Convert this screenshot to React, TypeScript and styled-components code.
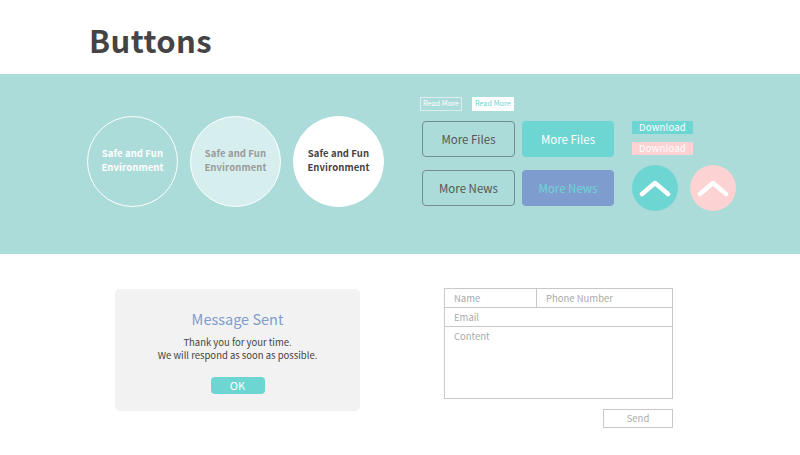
import React from "react";
import styled, { createGlobalStyle } from "styled-components";

const Global = createGlobalStyle`
  html, body { margin: 0; padding: 0; background: #ffffff; }
  body { font-family: "Noto Sans CJK TC", "Noto Sans", sans-serif; }
  * { box-sizing: border-box; }
`;

const TEAL = "#6dd6d3";
const PINK = "#fcd2d3";
const BLUE = "#7f9ccf";

const Page = styled.div`
  width: 800px;
  height: 455px;
  display: flex;
  flex-direction: column;
`;

const Header = styled.header`
  height: 74px;
  padding: 24px 0 0 89px;
  display: flex;
  align-items: flex-start;
`;

const Title = styled.h1`
  margin: 0;
  font-size: 31px;
  font-weight: 700;
  color: #444444;
  line-height: 1;
  letter-spacing: 0.4px;
`;

const Band = styled.section`
  height: 180px;
  background: #acdcd9;
  display: flex;
  align-items: flex-start;
  padding: 22px 0 0 87px;
`;

const CircleGroup = styled.div`
  display: flex;
  gap: 12px;
  margin-top: 20px;
`;

const Circle = styled.div<{ $variant: "outline" | "soft" | "solid" }>`
  width: 91px;
  height: 91px;
  border-radius: 50%;
  border: 1.5px solid #ffffff;
  display: flex;
  align-items: center;
  justify-content: center;
  text-align: center;
  padding-bottom: 3px;
  font-size: 9.5px;
  font-weight: 700;
  line-height: 14px;
  letter-spacing: 0.1px;
  background: ${(p) =>
    p.$variant === "outline" ? "transparent" : p.$variant === "soft" ? "#d6eeed" : "#ffffff"};
  color: ${(p) =>
    p.$variant === "outline" ? "#ffffff" : p.$variant === "soft" ? "#9a9a9a" : "#444444"};
`;

const ButtonGroup = styled.div`
  display: flex;
  flex-direction: column;
  margin-left: 36px;
`;

const SmallRow = styled.div`
  display: flex;
  gap: 10px;
  align-items: center;
  height: 15px;
`;

const Tiny = styled.div<{ $filled?: boolean }>`
  height: 14px;
  padding: 0 2px;
  display: flex;
  align-items: center;
  font-size: 7.3px;
  line-height: 1;
  border: 1px solid ${(p) => (p.$filled ? "#ffffff" : "#dcefee")};
  background: ${(p) => (p.$filled ? "#ffffff" : "transparent")};
  color: ${(p) => (p.$filled ? TEAL : "#ffffff")};
`;

const Grid = styled.div`
  margin-top: 10px;
  margin-left: 2px;
  display: grid;
  grid-template-columns: 93px 92px;
  column-gap: 7px;
  row-gap: 13px;
`;

const Btn = styled.div<{ $kind: "outline" | "teal" | "blue" }>`
  height: 36px;
  border-radius: 4px;
  display: flex;
  align-items: center;
  justify-content: center;
  font-size: 11.5px;
  border: 1px solid ${(p) => (p.$kind === "outline" ? "#6f8e8c" : "transparent")};
  background: ${(p) => (p.$kind === "teal" ? TEAL : p.$kind === "blue" ? BLUE : "transparent")};
  color: ${(p) => (p.$kind === "teal" ? "#ffffff" : p.$kind === "blue" ? TEAL : "#555555")};
`;

const RightGroup = styled.div`
  display: flex;
  flex-direction: column;
  margin-left: 18px;
  margin-top: 25px;
`;

const Download = styled.div<{ $pink?: boolean }>`
  width: 61px;
  height: 13px;
  border-radius: 1px;
  background: ${(p) => (p.$pink ? PINK : TEAL)};
  color: #ffffff;
  font-size: 9.5px;
  line-height: 13px;
  letter-spacing: 0.2px;
  text-align: center;
  & + & { margin-top: 8px; }
`;

const UpRow = styled.div`
  display: flex;
  gap: 12px;
  margin-top: 10px;
`;

const UpCircle = styled.div<{ $pink?: boolean }>`
  width: 46px;
  height: 46px;
  border-radius: 50%;
  background: ${(p) => (p.$pink ? PINK : TEAL)};
  display: flex;
  align-items: center;
  justify-content: center;
`;

const Lower = styled.section`
  display: flex;
  align-items: flex-start;
  padding: 34px 0 0 115px;
`;

const Card = styled.div`
  width: 245px;
  height: 122px;
  margin-top: 1px;
  background: #f2f2f2;
  border-radius: 5px;
  display: flex;
  flex-direction: column;
  align-items: center;
  padding-top: 20px;
`;

const CardTitle = styled.div`
  font-size: 14.5px;
  color: ${BLUE};
  line-height: 20px;
`;

const CardText = styled.div`
  margin-top: 7px;
  font-size: 9.5px;
  line-height: 12.5px;
  color: #444444;
  text-align: center;
`;

const Ok = styled.div`
  margin-top: 16px;
  width: 54px;
  height: 17px;
  border-radius: 4px;
  background: ${TEAL};
  color: #ffffff;
  font-size: 11px;
  line-height: 17px;
  text-align: center;
`;

const FormWrap = styled.div`
  margin-left: 84px;
  display: flex;
  flex-direction: column;
  align-items: flex-end;
`;

const Form = styled.div`
  width: 229px;
  border: 1px solid #c8c8c8;
  display: grid;
  grid-template-columns: 92px 1fr;
  grid-template-rows: 19px 19px 71px;
`;

const Field = styled.div<{ $span?: boolean; $right?: boolean; $last?: boolean }>`
  grid-column: ${(p) => (p.$span ? "1 / 3" : "auto")};
  border-right: ${(p) => (p.$right ? "1px solid #c8c8c8" : "none")};
  border-bottom: ${(p) => (p.$last ? "none" : "1px solid #c8c8c8")};
  padding: 3px 9px 0;
  font-size: 9.5px;
  line-height: 13px;
  color: #aaaaaa;
`;

const Send = styled.div`
  margin-top: 10px;
  width: 70px;
  height: 19px;
  border: 1px solid #c8c8c8;
  color: #aaaaaa;
  font-size: 9.5px;
  line-height: 17px;
  text-align: center;
`;

const Chevron = () => (
  <svg width="32" height="18" viewBox="0 0 32 18">
    <path d="M3 15 L16 4 L29 15" fill="none" stroke="#ffffff" strokeWidth="4.5" strokeLinecap="round" strokeLinejoin="round" />
  </svg>
);

export default function App() {
  return (
    <Page>
      <Global />
      <Header>
        <Title>Buttons</Title>
      </Header>
      <Band>
        <CircleGroup>
          <Circle $variant="outline">Safe and Fun<br />Environment</Circle>
          <Circle $variant="soft">Safe and Fun<br />Environment</Circle>
          <Circle $variant="solid">Safe and Fun<br />Environment</Circle>
        </CircleGroup>
        <ButtonGroup>
          <SmallRow>
            <Tiny>Read More</Tiny>
            <Tiny $filled>Read More</Tiny>
          </SmallRow>
          <Grid>
            <Btn $kind="outline">More Files</Btn>
            <Btn $kind="teal">More Files</Btn>
            <Btn $kind="outline">More News</Btn>
            <Btn $kind="blue">More News</Btn>
          </Grid>
        </ButtonGroup>
        <RightGroup>
          <Download>Download</Download>
          <Download $pink>Download</Download>
          <UpRow>
            <UpCircle><Chevron /></UpCircle>
            <UpCircle $pink><Chevron /></UpCircle>
          </UpRow>
        </RightGroup>
      </Band>
      <Lower>
        <Card>
          <CardTitle>Message Sent</CardTitle>
          <CardText>
            Thank you for your time.<br />We will respond as soon as possible.
          </CardText>
          <Ok>OK</Ok>
        </Card>
        <FormWrap>
          <Form>
            <Field $right>Name</Field>
            <Field>Phone Number</Field>
            <Field $span>Email</Field>
            <Field $span $last>Content</Field>
          </Form>
          <Send>Send</Send>
        </FormWrap>
      </Lower>
    </Page>
  );
}
